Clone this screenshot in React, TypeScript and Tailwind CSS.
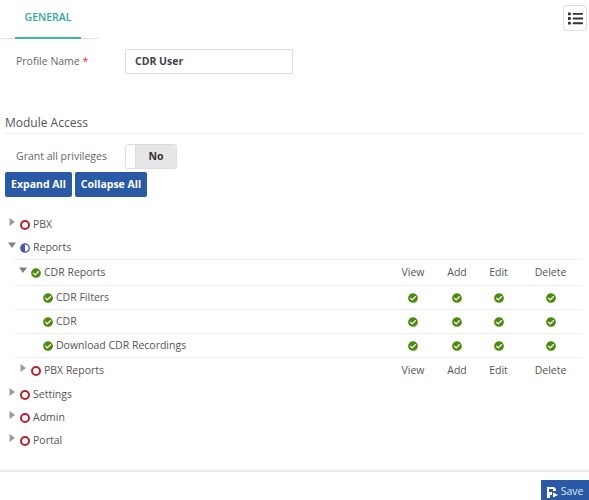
import { FaCheckCircle, FaAdjust, FaList } from "react-icons/fa"

const font = { fontFamily: '"Open Sans", sans-serif' }

function Caret({ open }: { open?: boolean }) {
    return (
        <svg width="8" height="8" viewBox="0 0 8 8" className="shrink-0 mt-[-5px]">
            {open ? <path d="M0 1.5h8L4 7z" fill="#808080" /> : <path d="M1.5 0v8L7 4z" fill="#9a9a9a" />}
        </svg>
    )
}

function Ring() {
    return <span className="w-[10px] h-[10px] rounded-full border-2 border-[#b5202f] shrink-0" />
}

function Check() {
    return <FaCheckCircle className="text-[#4f8a10] shrink-0" size={10} />
}

function Perms({ labels }: { labels?: boolean }) {
    const cols = [
        ["View", "w-[46px]"],
        ["Add", "w-[42px]"],
        ["Edit", "w-[41px]"],
        ["Delete", "w-[63px]"],
    ]
    return (
        <div className="ml-auto flex pr-[0px]">
            {cols.map(([name, w]) => (
                <div key={name} className={`${w} flex justify-center`}>
                    {labels ? <span>{name}</span> : <Check />}
                </div>
            ))}
        </div>
    )
}

function TopRow({ label, open, half }: { label: string; open?: boolean; half?: boolean }) {
    return (
        <div className="h-[23px] flex items-center pl-[8px] gap-[4px]">
            <Caret open={open} />
            {half ? <FaAdjust className="text-[#4a58a8] shrink-0 ml-[0px]" size={10} /> : <Ring />}
            <span className="ml-[-1px]">{label}</span>
        </div>
    )
}

export default function App() {
    return (
        <div style={font} className="relative w-[589px] h-[500px] bg-white overflow-hidden text-[10.5px] text-[#555]">
            <div className="flex items-start justify-between pr-[2px]">
                <div className="w-[100px] h-[39px] border-b border-[#e5e5e5]">
                    <div className="ml-[15px] w-[66px] h-[39px] border-b-2 border-[#3fb5a6] flex justify-center pt-[10px] text-[#2fa89a] text-[10.5px] font-semibold">
                        GENERAL
                    </div>
                </div>
                <button className="mt-[5px] w-[24px] h-[26px] border border-[#ddd] rounded-[3px] flex items-center justify-center text-[#333]">
                    <FaList size={15} />
                </button>
            </div>

            <div className="flex items-center mt-[10px] pl-[16px] h-[25px]">
                <label className="w-[109px] text-[#666]">
                    Profile Name <span className="text-[#d9263a]">*</span>
                </label>
                <div className="w-[168px] h-[25px] border border-[#ddd] flex items-center pl-[9px] font-bold text-[#444]">CDR User</div>
            </div>

            <div className="mt-[41px] mx-[5px] h-[16px] border-b border-[#eee] text-[12px] leading-[16px] pb-[0px] text-[#555] box-content pb-[2px]">
                Module Access
            </div>

            <div className="flex items-center mt-[10px] pl-[16px] h-[25px]">
                <label className="w-[109px] text-[#666]">Grant all privileges</label>
                <div className="w-[52px] h-[25px] border border-[#ddd] rounded-[3px] flex overflow-hidden">
                    <span className="w-[10px] bg-white border-r border-[#ddd]" />
                    <span className="flex-1 bg-[#e6e6e6] flex items-center justify-center font-bold text-[#333]">No</span>
                </div>
            </div>

            <div className="flex gap-[3px] mt-[3px] ml-[5px]">
                <button className="w-[67px] h-[25px] bg-[#2a5aa5] rounded-[2px] text-white font-bold">Expand All</button>
                <button className="w-[72px] h-[25px] bg-[#2a5aa5] rounded-[2px] text-white font-bold">Collapse All</button>
            </div>

            <div className="mt-[16px]">
                <TopRow label="PBX" />
                <TopRow label="Reports" open half />
                <div className="ml-[15px] mr-[7px]">
                    <div className="h-[26px] border-t border-[#eee] flex items-center pl-[4px] gap-[4px]">
                        <Caret open />
                        <Check />
                        <span className="ml-[-1px]">CDR Reports</span>
                        <Perms labels />
                    </div>
                    {["CDR Filters", "CDR", "Download CDR Recordings"].map((name) => (
                        <div key={name} className="h-[24px] border-t border-[#eee] flex items-center pl-[28px] gap-[3px]">
                            <Check />
                            <span>{name}</span>
                            <Perms />
                        </div>
                    ))}
                    <div className="h-[26px] border-t border-[#eee] flex items-center pl-[4px] gap-[4px]">
                        <Caret />
                        <Ring />
                        <span className="ml-[-1px]">PBX Reports</span>
                        <Perms labels />
                    </div>
                </div>
                <TopRow label="Settings" />
                <TopRow label="Admin" />
                <TopRow label="Portal" />
            </div>

            <div className="mt-[18px] border-t-2 border-[#e8e8e8] flex justify-end pt-[8px]">
                <button className="w-[48px] h-[24px] bg-[#2a5aa5] text-[#dfe7f3] flex items-center justify-center gap-[3px]">
                    <svg width="11" height="11" viewBox="0 0 11 11">
                        <path d="M0 0h7l2 2v2L6 4 6 2H2v3h3v3L3 8v3H0z" fill="#fff" />
                        <path d="M6 5.5l5 2.5-5 2.5z" fill="#fff" />
                    </svg>
                    Save
                </button>
            </div>
        </div>
    )
}
